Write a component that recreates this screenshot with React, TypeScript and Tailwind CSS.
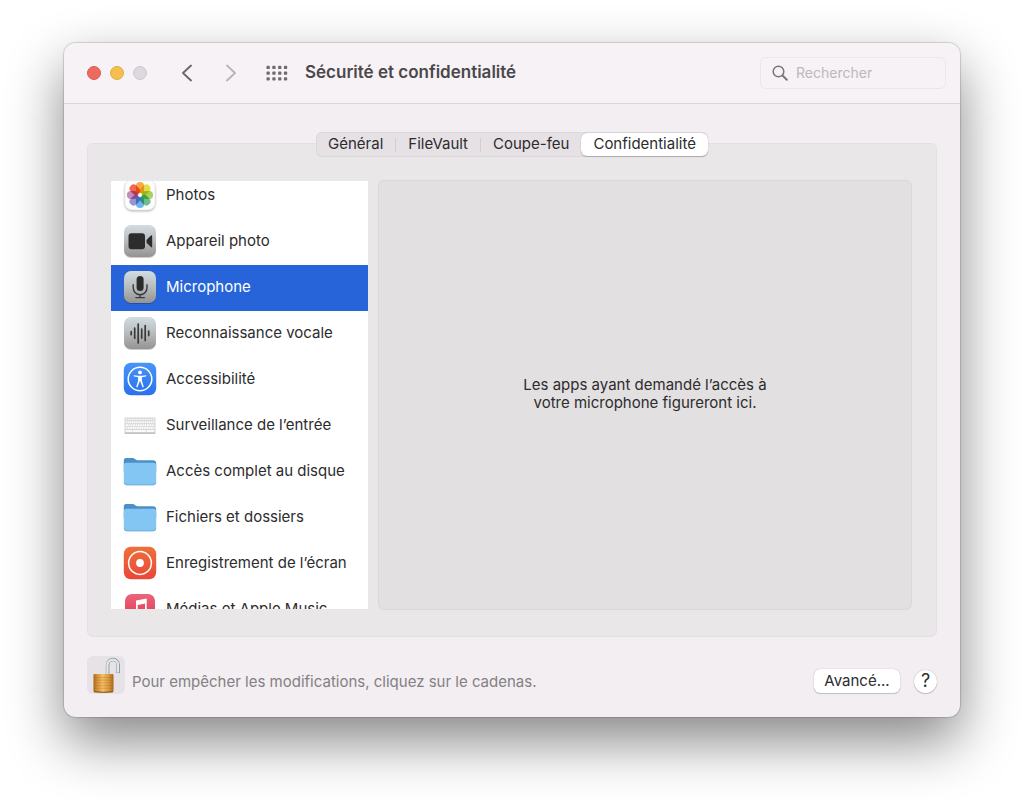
import React from "react";

const TABS = ["Général", "FileVault", "Coupe-feu", "Confidentialité"];

function PhotosIcon() {
  const petals = ["#f9a32c", "#e6dc35", "#a0cf52", "#5dbb85", "#5fb0ea", "#8f8bd0", "#c080b6", "#f25a45"];
  return (
    <svg viewBox="0 0 34 34" className="size-[34px] drop-shadow-[0_1px_1px_rgba(0,0,0,0.3)]" aria-hidden="true">
      <rect x="2" y="2" width="30" height="30" rx="7" fill="#fdfdfd" stroke="#e6e6e6" strokeWidth="0.5" />
      {petals.map((color, i) => (
        <rect
          key={color}
          x="12.900"
          y="3.900"
          width="8.200"
          height="11.400"
          rx="4.100"
          fill={color}
          transform={`rotate(${i * 45} 17 17)`}
          className="mix-blend-multiply"
          opacity="0.9"
        />
      ))}
    </svg>
  );
}

function GreyTile({ id, children }: { id: string; children: React.ReactNode }) {
  return (
    <svg viewBox="0 0 34 34" className="size-[34px] drop-shadow-[0_1px_0_rgba(0,0,0,0.2)]" aria-hidden="true">
      <defs>
        <linearGradient id={id} x1="0" y1="0" x2="0" y2="1">
          <stop offset="0" stopColor="#d2dce2" />
          <stop offset="0.5" stopColor="#b8bcbd" />
          <stop offset="1" stopColor="#949391" />
        </linearGradient>
      </defs>
      <rect x="1" y="1" width="32" height="32" rx="7" fill={`url(#${id})`} />
      {children}
    </svg>
  );
}

function CameraIcon() {
  return (
    <GreyTile id="tile-camera">
      <rect x="5.500" y="9.300" width="16.500" height="16" rx="3" fill="#2c2c2d" />
      <path d="M23.500 16 27.900 11.600q1.300-1 1.300.5v10.500q0 1.500-1.300.5l-4.400-4.400z" fill="#2c2c2d" />
    </GreyTile>
  );
}

function MicrophoneIcon() {
  return (
    <GreyTile id="tile-microphone">
      <rect x="13.600" y="6" width="7" height="15" rx="3.500" fill="#2c2c2d" />
      <path
        d="M10.200 14.800v3a6.900 6.900 0 0 0 13.800 0v-3M17.100 24.800v2.600M12.800 27.600h8.600"
        fill="none"
        stroke="#3a3a3b"
        strokeWidth="1.400"
        strokeLinecap="round"
      />
    </GreyTile>
  );
}

function VoiceIcon() {
  return (
    <GreyTile id="tile-voice">
      <path
        d="M8.200 15.700v3M11.700 12.200v10M15.200 8v19M18.700 13v9M22.200 9.500v15M25.700 15v4.400"
        fill="none"
        stroke="#3a3a3b"
        strokeWidth="1.700"
        strokeLinecap="round"
      />
    </GreyTile>
  );
}

function AccessibilityIcon() {
  return (
    <svg viewBox="0 0 34 34" className="size-[34px]" aria-hidden="true">
      <defs>
        <linearGradient id="tile-access" x1="0" y1="0" x2="0" y2="1">
          <stop offset="0" stopColor="#4795f7" />
          <stop offset="1" stopColor="#2a70ee" />
        </linearGradient>
      </defs>
      <rect x="0.800" y="0.800" width="32.400" height="32.400" rx="7" fill="url(#tile-access)" />
      <circle cx="17" cy="17" r="11.800" fill="none" stroke="#fff" strokeWidth="1.500" />
      <circle cx="17" cy="10.400" r="1.900" fill="#fff" />
      <path
        d="M10.800 13.200q-.5 1 .5 1.200l3.800.8v3.600l-1.800 5.800q0 1 1 .8l2.700-6.600 2.700 6.600q1 .2 1-.8l-1.800-5.800v-3.600l3.800-.8q1-.2.5-1.200l-4.200.6h-4z"
        fill="#fff"
      />
    </svg>
  );
}

function KeyboardIcon() {
  return (
    <svg viewBox="0 0 34 34" className="size-[34px]" aria-hidden="true">
      <rect x="1.500" y="9.500" width="31" height="16" rx="1" fill="#d5d5d5" />
      <rect x="1.500" y="24.700" width="31" height="1" rx="0.500" fill="#b8b8b8" />
      <path d="M2.600 11.500h28.800" stroke="#f8f8f8" strokeWidth="1.500" strokeDasharray="1.500 .6" />
      <path d="M2.600 14.300h28.800" stroke="#fafafa" strokeWidth="2" strokeDasharray="1.600 .5" />
      <path d="M2.600 17.200h28.800" stroke="#fafafa" strokeWidth="2" strokeDasharray="2.400 .5 1.600 .5 1.600 .5" />
      <path d="M2.600 20.100h28.800" stroke="#fafafa" strokeWidth="2" strokeDasharray="1.800 .5" />
      <path d="M2.600 23h6.500M9.600 23h13.200M23.400 23h8" stroke="#fafafa" strokeWidth="2" strokeDasharray="13.200 .5" />
    </svg>
  );
}

function FolderIcon() {
  return (
    <svg viewBox="0 0 34 34" className="size-[34px]" aria-hidden="true">
      <path d="M.8 6.600q0-2.600 2.400-2.600h6.400q1.200 0 2 .8 1.200 1.400 3 1.400h15.200q3.400 0 3.400 3.200V18H.8z" fill="#4a90c6" />
      <path d="M.8 11.400q0-2.600 2.600-2.600h27.200q2.600 0 2.600 2.600v16.800q0 3-3 3H3.800q-3 0-3-3z" fill="#83c6f3" />
      <path d="M1.200 28.200q.3 2.600 2.600 2.600h26.400q2.300 0 2.600-2.600" fill="none" stroke="#68abd8" strokeWidth="0.800" />
    </svg>
  );
}

function RecordIcon() {
  return (
    <svg viewBox="0 0 34 34" className="size-[34px]" aria-hidden="true">
      <defs>
        <linearGradient id="tile-record" x1="0" y1="0" x2="0" y2="1">
          <stop offset="0" stopColor="#ee7039" />
          <stop offset="1" stopColor="#e9473a" />
        </linearGradient>
      </defs>
      <rect x="0.800" y="0.800" width="32.400" height="32.400" rx="7" fill="url(#tile-record)" />
      <circle cx="17" cy="17" r="11.400" fill="none" stroke="#fff" strokeWidth="1.500" />
      <circle cx="17" cy="17" r="3.900" fill="#fff" />
    </svg>
  );
}

function MusicIcon() {
  return (
    <svg viewBox="0 0 34 34" className="size-[34px]" aria-hidden="true">
      <defs>
        <linearGradient id="tile-music" x1="0" y1="0" x2="0" y2="1">
          <stop offset="0" stopColor="#ea657b" />
          <stop offset="1" stopColor="#e2314c" />
        </linearGradient>
      </defs>
      <rect x="2" y="2" width="30" height="30" rx="7" fill="url(#tile-music)" />
      <path
        d="M13 8.600 23.700 6.500v15.300a3 2.600 0 1 1-1.700-2.400v-8l-7.300 1.500v11a3 2.600 0 1 1-1.700-2.400z"
        fill="#fff"
      />
    </svg>
  );
}

const ITEMS = [
  { label: "Photos", Icon: PhotosIcon },
  { label: "Appareil photo", Icon: CameraIcon },
  { label: "Microphone", Icon: MicrophoneIcon },
  { label: "Reconnaissance vocale", Icon: VoiceIcon },
  { label: "Accessibilité", Icon: AccessibilityIcon },
  { label: "Surveillance de l’entrée", Icon: KeyboardIcon },
  { label: "Accès complet au disque", Icon: FolderIcon },
  { label: "Fichiers et dossiers", Icon: FolderIcon },
  { label: "Enregistrement de l’écran", Icon: RecordIcon },
  { label: "Médias et Apple Music", Icon: MusicIcon },
];

function PadlockIcon() {
  return (
    <svg viewBox="0 0 38 38" className="size-[38px]" aria-hidden="true">
      <defs>
        <linearGradient id="lock-body" x1="0" y1="0" x2="1" y2="0">
          <stop offset="0" stopColor="#a8691c" />
          <stop offset="0.150" stopColor="#d08a30" />
          <stop offset="0.450" stopColor="#f2c069" />
          <stop offset="0.750" stopColor="#dc9a40" />
          <stop offset="1" stopColor="#a96a20" />
        </linearGradient>
      </defs>
      <path d="M20.600 18V9.500C20.600 1.500 31.200 1.500 31.200 9.500V17" fill="none" stroke="#8b979b" strokeWidth="3.600" />
      <path d="M20.400 18V9.500C20.400 1.700 31 1.700 31 9.500V16.600" fill="none" stroke="#dfe8ea" strokeWidth="2.200" />
      <path d="M6.500 19q0-1 1-1h18q1 0 1 1v16q0 1-1 1.200-9 1-18 0-1-.2-1-1.200z" fill="url(#lock-body)" />
      <path d="M6.500 21.500h20M6.500 24.200h20M6.500 26.900h20M6.500 29.600h20M6.500 32.300h20" stroke="#9b5e17" strokeOpacity="0.350" strokeWidth="0.800" />
      <path d="M7 35.700q9.500 1.200 19 0" fill="none" stroke="#804d14" strokeWidth="1" />
    </svg>
  );
}

function Toolbar() {
  const dots = [0, 1, 2].flatMap((row) => [0, 1, 2, 3].map((col) => ({ row, col })));
  return (
    <header className="flex h-[61px] items-center border-b border-[#d9d5d9] bg-[#f7f2f6] pr-3.5 pl-[23px]">
      <div className="flex gap-[9px]">
        <button aria-label="Fermer" className="size-3.5 rounded-full border border-[#dc5d52] bg-[#ed6a5f]" />
        <button aria-label="Réduire" className="size-3.5 rounded-full border border-[#e0ad43] bg-[#f5bf4f]" />
        <button aria-label="Agrandir" disabled className="size-3.5 rounded-full border border-[#cdc8cd] bg-[#ddd8dd]" />
      </div>
      <div className="ml-6 flex gap-3">
        <button aria-label="Précédent" className="flex size-8 items-center justify-center">
          <svg viewBox="0 0 10 18" className="h-[18px] w-2.5" fill="none" stroke="#6a656a" strokeWidth="1.800" strokeLinecap="round" strokeLinejoin="round">
            <path d="M9 1.500 1 9l8 7.500" />
          </svg>
        </button>
        <button aria-label="Suivant" disabled className="flex size-8 items-center justify-center">
          <svg viewBox="0 0 10 18" className="h-[18px] w-2.5" fill="none" stroke="#b9b4b9" strokeWidth="1.800" strokeLinecap="round" strokeLinejoin="round">
            <path d="M1 1.500 9 9l-8 7.500" />
          </svg>
        </button>
      </div>
      <button aria-label="Tout afficher" className="ml-4 flex h-8 w-7 items-center justify-center">
        <svg viewBox="0 0 22 16" className="h-4 w-[22px]" fill="#716b70">
          {dots.map(({ row, col }) => (
            <rect key={`${row}-${col}`} x={0.5 + col * 5.800} y={0.800 + row * 5.700} width="3.300" height="3.300" rx="0.900" />
          ))}
        </svg>
      </button>
      <h1 className="ml-3.5 text-[17px] font-semibold whitespace-nowrap text-[#4b484b]">Sécurité et confidentialité</h1>
      <label className="ml-auto flex h-8 w-[186px] items-center gap-2 rounded-md border border-[#ebe6ea] px-[11px]">
        <svg viewBox="0 0 16 16" className="size-4 shrink-0" fill="none" stroke="#7b767b" strokeWidth="1.500" strokeLinecap="round">
          <circle cx="6.500" cy="6.500" r="5.300" />
          <path d="m10.500 10.500 4.300 4.300" strokeWidth="2" />
        </svg>
        <input
          type="search"
          aria-label="Rechercher"
          placeholder="Rechercher"
          className="w-full min-w-0 bg-transparent text-sm outline-none placeholder:text-[#bdb8bd]"
        />
      </label>
    </header>
  );
}

export default function App() {
  const [selected, setSelected] = React.useState("Microphone");
  return (
    <div className="min-h-screen bg-white px-16 pt-[43px] pb-[85px] font-['Inter',sans-serif] text-[15px] text-[#2d2c2d]">
      <main className="overflow-hidden rounded-xl bg-[#f3eef2] shadow-[0_0_1px_1px_rgba(0,0,0,0.15),0_24px_56px_rgba(0,0,0,0.48)]">
        <Toolbar />
        <div className="px-[23px] pt-7 pb-[23px]">
          <div className="relative z-10 flex justify-center">
            <div role="tablist" className="flex h-[25px] items-center rounded-md bg-[#e6e1e5] shadow-[inset_0_0_0_1px_#ddd8dc]">
              {TABS.map((tab, i) => (
                <React.Fragment key={tab}>
                  {(i === 1 || i === 2) && <span className="h-3.5 w-px bg-[#d3ced2]" />}
                  <button
                    role="tab"
                    aria-selected={i === 3}
                    className={
                      i === 3
                        ? "h-[23px] rounded-md bg-white px-3 shadow-[0_0_1px_rgba(0,0,0,0.3),0_1px_1px_rgba(0,0,0,0.2)]"
                        : "h-[23px] px-3"
                    }
                  >
                    {tab}
                  </button>
                </React.Fragment>
              ))}
            </div>
          </div>
          <section className="-mt-3.5 flex gap-2.5 rounded-md border border-[#e3e0e2] bg-[#e9e7e8] pt-9 pr-6 pb-[26px] pl-[23px]">
            <div className="my-px h-107 w-[257px] shrink-0 overflow-hidden bg-white">
              <ul className="-mt-2">
                {ITEMS.map(({ label, Icon }) => (
                  <li key={label}>
                    <button
                      onClick={() => setSelected(label)}
                      className={
                        selected === label
                          ? "flex h-[46px] w-full items-center gap-[9px] bg-[#2764d9] pb-0.5 pl-3 text-left text-white"
                          : "flex h-[46px] w-full items-center gap-[9px] pb-0.5 pl-3 text-left"
                      }
                    >
                      <Icon />
                      <span className="whitespace-nowrap">{label}</span>
                    </button>
                  </li>
                ))}
              </ul>
            </div>
            <div className="flex flex-1 items-center justify-center rounded-md border border-[#dad8d9] bg-[#e2e0e1] pb-0.5 text-center leading-[18px]">
              <p>
                Les apps ayant demandé l’accès à
                <br />
                votre microphone figureront ici.
              </p>
            </div>
          </section>
          <footer className="mt-[19px] flex items-center">
            <button aria-label="Verrouiller" className="rounded-md bg-[#e7e2e6]">
              <PadlockIcon />
            </button>
            <p className="mt-3.5 ml-[7px] text-[#838083]">Pour empêcher les modifications, cliquez sur le cadenas.</p>
            <div className="mt-3 ml-auto flex items-center gap-3.5">
              <button className="h-6 w-[86px] rounded-md bg-white shadow-[0_0_1px_rgba(0,0,0,0.35),0_1px_1px_rgba(0,0,0,0.18)]">Avancé...</button>
              <button aria-label="Aide" className="flex size-[23px] items-center justify-center rounded-full bg-white text-lg leading-none shadow-[0_0_1px_rgba(0,0,0,0.35),0_1px_1px_rgba(0,0,0,0.18)]">
                ?
              </button>
            </div>
          </footer>
        </div>
      </main>
    </div>
  );
}
